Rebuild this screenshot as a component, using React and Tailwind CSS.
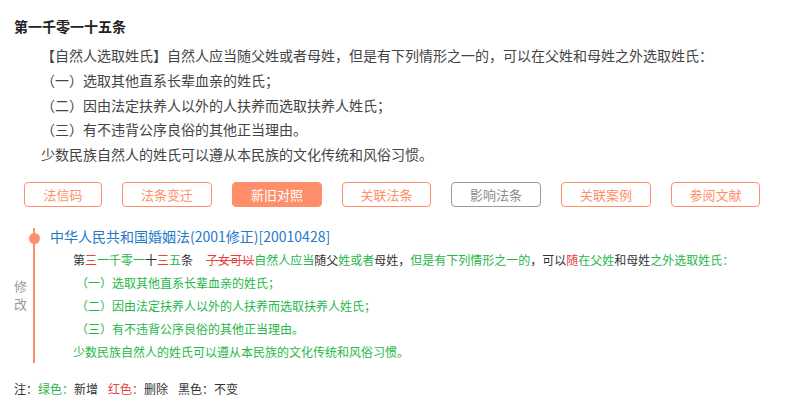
const FONT = { fontFamily: '"Microsoft YaHei", "Noto Sans CJK SC", "Noto Sans", sans-serif' };

// 操作按钮
const tabs = [
  { label: '法信码', width: 'w-[78px]' },
  { label: '法条变迁', width: 'w-[90px]' },
  { label: '新旧对照', width: 'w-[90px]', active: true },
  { label: '关联法条', width: 'w-[89px]' },
  { label: '影响法条', width: 'w-[90px]', muted: true },
  { label: '关联案例', width: 'w-[90px]' },
  { label: '参阅文献', width: 'w-[89px]' },
];

// g = 新增, r = 删除, k = 不变
const diffLine = [
  ['k', '第'],
  ['r', '三'],
  ['g', '一千零一'],
  ['k', '十'],
  ['r', '三'],
  ['g', '五'],
  ['k', '条'],
];

const diffBody = [
  ['d', '子女可以'],
  ['g', '自然人应当'],
  ['k', '随父'],
  ['g', '姓或者'],
  ['k', '母姓，'],
  ['g', '但是有下列情形之一的'],
  ['k', '，可以'],
  ['r', '随'],
  ['g', '在父姓'],
  ['k', '和母姓'],
  ['g', '之外选取姓氏：'],
];

const colorOf = {
  k: 'text-[#333]',
  g: 'text-[#1fb74a]',
  r: 'text-[#e8433f]',
  d: 'text-[#e8433f] line-through',
};

const Segments = ({ items }) =>
  items.map(([type, text], i) => (
    <span key={i} className={colorOf[type]}>
      {text}
    </span>
  ));

const TabButton = ({ label, width, active, muted }) => {
  let cls = 'border-[#ff8f6b] text-[#ff8f6b] bg-white';
  if (active) cls = 'border-[#ff8f6b] bg-[#ff8f6b] text-white';
  if (muted) cls = 'border-[#9a9a9a] text-[#8c8c8c] bg-white';
  return (
    <button
      className={`${width} h-[25px] rounded-[4px] border text-[13px] leading-none flex items-center justify-center ${cls}`}
    >
      {label}
    </button>
  );
};

export default function App() {
  return (
    <div className="w-[790px] h-[405px] bg-white overflow-hidden pl-[14px] pt-[16px]" style={FONT}>
      <h3 className="text-[14px] leading-[20px] font-bold text-[#222]">第一千零一十五条</h3>

      <div className="mt-[7px] pl-[27px] text-[14px] leading-[24.75px] text-[#444]">
        <p>【自然人选取姓氏】自然人应当随父姓或者母姓，但是有下列情形之一的，可以在父姓和母姓之外选取姓氏：</p>
        <p>（一）选取其他直系长辈血亲的姓氏；</p>
        <p>（二）因由法定扶养人以外的人扶养而选取扶养人姓氏；</p>
        <p>（三）有不违背公序良俗的其他正当理由。</p>
        <p>少数民族自然人的姓氏可以遵从本民族的文化传统和风俗习惯。</p>
      </div>

      <div className="mt-[15px] ml-[10px] flex gap-[20px]">
        {tabs.map((t) => (
          <TabButton key={t.label} {...t} />
        ))}
      </div>

      {/* 修改记录 */}
      <div className="mt-[21px] flex">
        <div className="w-[36px] flex">
          <div className="w-[13px] flex items-center justify-center">
            <span className="text-[13px] leading-[18px] text-[#999] w-[13px] text-center">修改</span>
          </div>
          <div className="relative ml-[6px] w-[2px] bg-[#ff8f6b]">
            <span className="absolute top-[5px] left-[-4.5px] w-[11px] h-[11px] rounded-full bg-[#ff8f6b]" />
          </div>
        </div>

        <div className="flex-1">
          <div className="text-[14px] leading-[17px] text-[#2479c9]">
            中华人民共和国婚姻法(2001修正)[20010428]
          </div>
          <div className="mt-[3px] pl-[23px] text-[12px] leading-[23px]">
            <p className="text-[#333]">
              <Segments items={diffLine} />
              <span className="ml-[13px]">
                <Segments items={diffBody} />
              </span>
            </p>
            <div className="pl-[3px] text-[#1fb74a]">
              <p>（一）选取其他直系长辈血亲的姓氏；</p>
              <p>（二）因由法定扶养人以外的人扶养而选取扶养人姓氏；</p>
              <p>（三）有不违背公序良俗的其他正当理由。</p>
            </div>
            <p className="text-[#1fb74a]">少数民族自然人的姓氏可以遵从本民族的文化传统和风俗习惯。</p>
          </div>
        </div>
      </div>

      <div className="mt-[16px] text-[12px] leading-[20px] text-[#333] flex">
        <span>注：</span>
        <span className="text-[#1fb74a]">绿色：</span>
        <span className="mr-[10px]">新增</span>
        <span className="text-[#e8433f]">红色：</span>
        <span className="mr-[10px]">删除</span>
        <span>黑色：</span>
        <span>不变</span>
      </div>
    </div>
  );
}
